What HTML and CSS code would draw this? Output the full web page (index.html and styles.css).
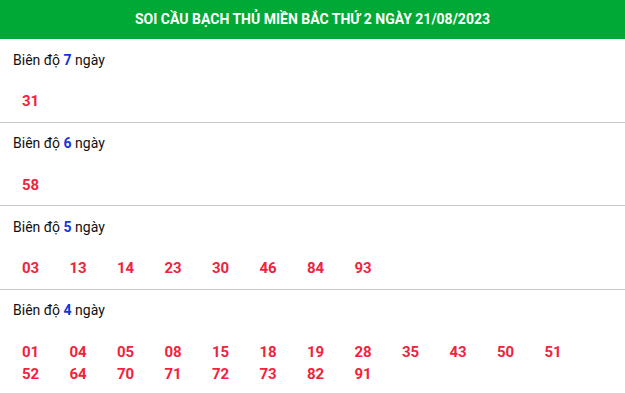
FILE: index.html
```html
<!DOCTYPE html>
<html lang="vi">
<head>
<meta charset="utf-8">
<title>Soi cầu bạch thủ</title>
<link rel="stylesheet" href="styles.css">
</head>
<body>
<div class="box">
  <h2 class="title">SOI CẦU BẠCH THỦ MIỀN BẮC THỨ 2 NGÀY 21/08/2023</h2>
  <div class="sec">
    <div class="label">Biên độ <b>7</b> ngày</div>
    <div class="nums"><span>31</span></div>
  </div>
  <div class="sec">
    <div class="label">Biên độ <b>6</b> ngày</div>
    <div class="nums"><span>58</span></div>
  </div>
  <div class="sec">
    <div class="label">Biên độ <b>5</b> ngày</div>
    <div class="nums"><span>03</span><span>13</span><span>14</span><span>23</span><span>30</span><span>46</span><span>84</span><span>93</span></div>
  </div>
  <div class="sec">
    <div class="label">Biên độ <b>4</b> ngày</div>
    <div class="nums"><span>01</span><span>04</span><span>05</span><span>08</span><span>15</span><span>18</span><span>19</span><span>28</span><span>35</span><span>43</span><span>50</span><span>51</span><span>52</span><span>64</span><span>70</span><span>71</span><span>72</span><span>73</span><span>82</span><span>91</span></div>
  </div>
</div>
</body>
</html>
```
FILE: styles.css
```css
html, body {
  margin: 0;
  padding: 0;
  background: #fff;
}
body {
  font-family: Roboto, "Liberation Sans", Arial, sans-serif;
  color: #111;
}
.title {
  margin: 0;
  height: 39px;
  background: #00a935;
  color: #fff;
  font-size: 14px;
  font-weight: 700;
  line-height: 39px;
  text-align: center;
}
.sec {
  padding: 9.5px 13px 9.5px;
  border-bottom: 1px solid #c8c8c8;
}
.sec:last-child {
  border-bottom: none;
}
.label {
  font-size: 14px;
  line-height: 22px;
}
.label b {
  color: #1434dc;
  font-weight: 700;
}
.nums {
  margin-top: 19.5px;
  padding-left: 9px;
  display: flex;
  flex-wrap: wrap;
}
.nums span {
  width: 47.5px;
  font-size: 15px;
  line-height: 22px;
  font-weight: 700;
  color: #f2223c;
}
```
